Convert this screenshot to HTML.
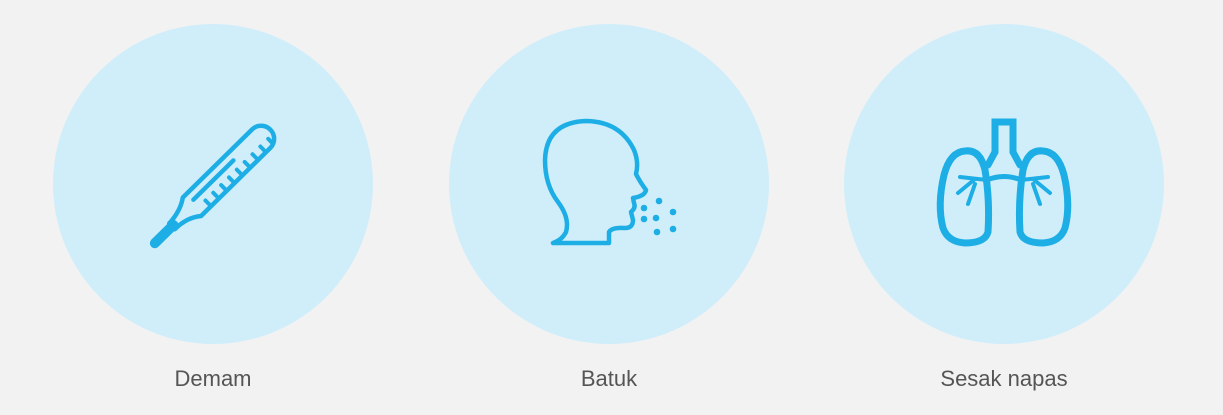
<!DOCTYPE html>
<html><head><meta charset="utf-8"><style>
html,body{margin:0;padding:0;background:#f2f2f2;width:1223px;height:415px;overflow:hidden}
.l{position:absolute;top:366px;font:22px "Liberation Sans",sans-serif;color:#555;transform:translateX(-50%);white-space:nowrap}
</style></head><body>
<svg width="1223" height="415" style="position:absolute;left:0;top:0">
<circle cx="213" cy="184" r="160" fill="#d0eefa"/>
<circle cx="609" cy="184" r="160" fill="#d0eefa"/>
<circle cx="1004" cy="184" r="160" fill="#d0eefa"/>
<g stroke="#1daee6" fill="none" stroke-linecap="round" stroke-linejoin="round">
<g transform="translate(152,246) rotate(-44.5)">
<path d="M4,0 L30,0" stroke-width="10"/>
<path d="M28,-4 Q45,-5 56,-13 L153,-13 A13,13 0 0 1 153,13 L56,13 Q45,4 28,4" stroke-width="4.5"/>
<path d="M62,-4 L118,-4" stroke-width="4.5"/>
<g stroke-width="4"><path d="M70,12 V5"/><path d="M81,12 V5"/><path d="M92,12 V5"/><path d="M103,12 V5"/><path d="M114,12 V5"/><path d="M125,12 V5"/><path d="M136,12 V5"/><path d="M147,12 V5"/><path d="M158,12 V5"/></g>
</g>
<path stroke-width="4.5" d="M553,243 L609,243 L609,232 Q612,227 625,228 Q633,228 633,220 L631,212 Q636,208 634,203 L633,198 Q645,196 646,190 Q640,182 636,174 Q639,162 634,150 Q620,121 585,121 Q546,123 545,160 Q545,185 558,202 Q570,218 566,232 Q562,240 553,243 Z"/>
<path stroke-width="7" stroke-linejoin="miter" d="M995,152 L995,122 L1013,122 L1013,152 L1020,165"/>
<path stroke-width="7" d="M995,152 L988,165"/>
<path stroke-width="7" d="M965,151 Q950,152 944,175 Q937,205 943,228 Q948,242 965,243 Q985,243 988,232 Q990,200 985,170 Q980,149 965,151 Z"/>
<path stroke-width="7" d="M1043,151 Q1058,152 1064,175 Q1071,205 1065,228 Q1060,242 1043,243 Q1023,243 1020,232 Q1018,200 1023,170 Q1028,149 1043,151 Z"/>
<path stroke-width="5" d="M987,180 Q1004,173 1021,180"/>
<g stroke-width="4"><path d="M987,180 L960,177 M975,179 L958,193 M975,184 L968,204"/><path d="M1021,180 L1048,177 M1033,179 L1050,193 M1033,184 L1040,204"/></g>
</g>
<g fill="#1daee6"><circle cx="659" cy="201" r="3.3"/><circle cx="644" cy="208" r="3.3"/><circle cx="673" cy="212" r="3.3"/><circle cx="644" cy="219" r="3.3"/><circle cx="656" cy="218" r="3.3"/><circle cx="657" cy="232" r="3.3"/><circle cx="673" cy="229" r="3.3"/></g>
</svg>
<div class="l" style="left:213px">Demam</div>
<div class="l" style="left:609px">Batuk</div>
<div class="l" style="left:1004px">Sesak napas</div>
</body></html>
